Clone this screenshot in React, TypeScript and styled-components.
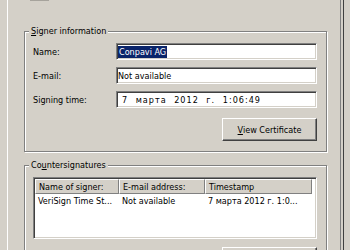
import styled, { createGlobalStyle } from "styled-components";

const Global = createGlobalStyle`
  html, body {
    margin: 0;
    padding: 0;
    background: #d4d0c8;
  }
  body {
    font-family: "DejaVu Sans Condensed", "DejaVu Sans", Tahoma, sans-serif;
    font-size: 9px;
    color: #000;
  }
`;

const Screen = styled.div`
  width: 350px;
  height: 250px;
  overflow: hidden;
  background: #d4d0c8;
  padding-left: 7px;
  box-sizing: border-box;
  display: flex;
`;

const Page = styled.div`
  width: 334px;
  height: 250px;
  box-sizing: border-box;
  border-left: 1px solid #fff;
  border-right: 1px solid #808080;
  box-shadow: 2px 0 0 #d4d0c8, 3px 0 0 #404040;
  padding-left: 16px;
  display: flex;
  flex-direction: column;
`;

const TopStub = styled.div`
  width: 19px;
  height: 2px;
  margin-left: 6px;
  background: #ecebe6;
  border-bottom: 1px solid #a6a39c;
`;

const Group = styled.div<{ $top: number }>`
  position: relative;
  width: 303px;
  box-sizing: border-box;
  margin-top: ${(p) => p.$top}px;
  border: 1px solid #808080;
  box-shadow: inset 1px 1px 0 #fff, 1px 1px 0 #fff;
  padding: 11px 9px 10px 8px;
  display: flex;
  flex-direction: column;
  flex-shrink: 0;
`;

const Caption = styled.span`
  position: absolute;
  top: -7px;
  left: 4px;
  padding: 0 2px;
  background: #d4d0c8;
  line-height: 13px;
  white-space: nowrap;

  u {
    text-decoration: underline;
    text-underline-offset: 1px;
  }
`;

const Fields = styled.div`
  display: grid;
  grid-template-columns: 83px 201px;
  row-gap: 7px;
  align-items: center;
`;

const Label = styled.span`
  white-space: nowrap;
`;

const Field = styled.div<{ $wide?: boolean }>`
  height: 17px;
  box-sizing: border-box;
  background: #fff;
  border-top: 1px solid #808080;
  border-left: 1px solid #808080;
  border-right: 1px solid #fff;
  border-bottom: 1px solid #fff;
  box-shadow: inset 1px 1px 0 #404040, inset -1px -1px 0 #d4d0c8;
  display: flex;
  align-items: center;
  padding-left: ${(p) => (p.$wide ? 5 : 1)}px;
  letter-spacing: ${(p) => (p.$wide ? 1 : 0)}px;
  word-spacing: ${(p) => (p.$wide ? 4 : 0)}px;
  white-space: nowrap;
`;

const Selected = styled.span`
  background: #0a246a;
  color: #fff;
  padding: 0 1px;
  line-height: 12px;
`;

const ButtonRow = styled.div<{ $top: number }>`
  display: flex;
  justify-content: flex-end;
  margin-top: ${(p) => p.$top}px;
`;

const Button = styled.button`
  width: 95px;
  height: 23px;
  box-sizing: border-box;
  background: #d4d0c8;
  font: inherit;
  color: #000;
  padding: 0;
  border-top: 1px solid #fff;
  border-left: 1px solid #fff;
  border-right: 1px solid #404040;
  border-bottom: 1px solid #404040;
  box-shadow: inset -1px -1px 0 #808080;
  flex-shrink: 0;

  u {
    text-underline-offset: 1px;
  }
`;

const List = styled.div`
  height: 62px;
  box-sizing: border-box;
  background: #fff;
  border-top: 1px solid #808080;
  border-left: 1px solid #808080;
  border-right: 1px solid #fff;
  border-bottom: 1px solid #fff;
  box-shadow: inset 1px 1px 0 #404040, inset -1px -1px 0 #d4d0c8;
  padding: 1px;
  display: flex;
  flex-direction: column;
  flex-shrink: 0;
`;

const Header = styled.div`
  display: grid;
  grid-template-columns: 84px 86px 107px;
  height: 15px;
`;

const HeadCell = styled.div`
  box-sizing: border-box;
  background: #d4d0c8;
  border-top: 1px solid #fff;
  border-left: 1px solid #fff;
  border-right: 1px solid #808080;
  border-bottom: 1px solid #808080;
  padding-left: 3px;
  display: flex;
  align-items: center;
  white-space: nowrap;
  overflow: hidden;
`;

const Row = styled.div`
  display: grid;
  grid-template-columns: 84px 86px 107px;
  height: 13px;
  align-items: center;
`;

const Cell = styled.div`
  padding-left: 3px;
  white-space: nowrap;
  overflow: hidden;
`;

export default function App() {
  return (
    <>
      <Global />
      <Screen>
        <Page>
          <TopStub />
          <Group $top={30}>
            <Caption>
              <u>S</u>igner information
            </Caption>
            <Fields>
              <Label>Name:</Label>
              <Field>
                <Selected>Conpavi AG</Selected>
              </Field>
              <Label>E-mail:</Label>
              <Field>Not available</Field>
              <Label>Signing time:</Label>
              <Field $wide>7 марта 2012 г. 1:06:49</Field>
            </Fields>
            <ButtonRow $top={10}>
              <Button>
                <u>V</u>iew Certificate
              </Button>
            </ButtonRow>
          </Group>
          <Group $top={13}>
            <Caption>
              Co<u>u</u>ntersignatures
            </Caption>
            <List>
              <Header>
                <HeadCell>Name of signer:</HeadCell>
                <HeadCell>E-mail address:</HeadCell>
                <HeadCell>Timestamp</HeadCell>
              </Header>
              <Row>
                <Cell>VeriSign Time St...</Cell>
                <Cell>Not available</Cell>
                <Cell>7 марта 2012 г. 1:0...</Cell>
              </Row>
            </List>
            <ButtonRow $top={8}>
              <Button aria-label="Details" />
            </ButtonRow>
          </Group>
        </Page>
      </Screen>
    </>
  );
}
